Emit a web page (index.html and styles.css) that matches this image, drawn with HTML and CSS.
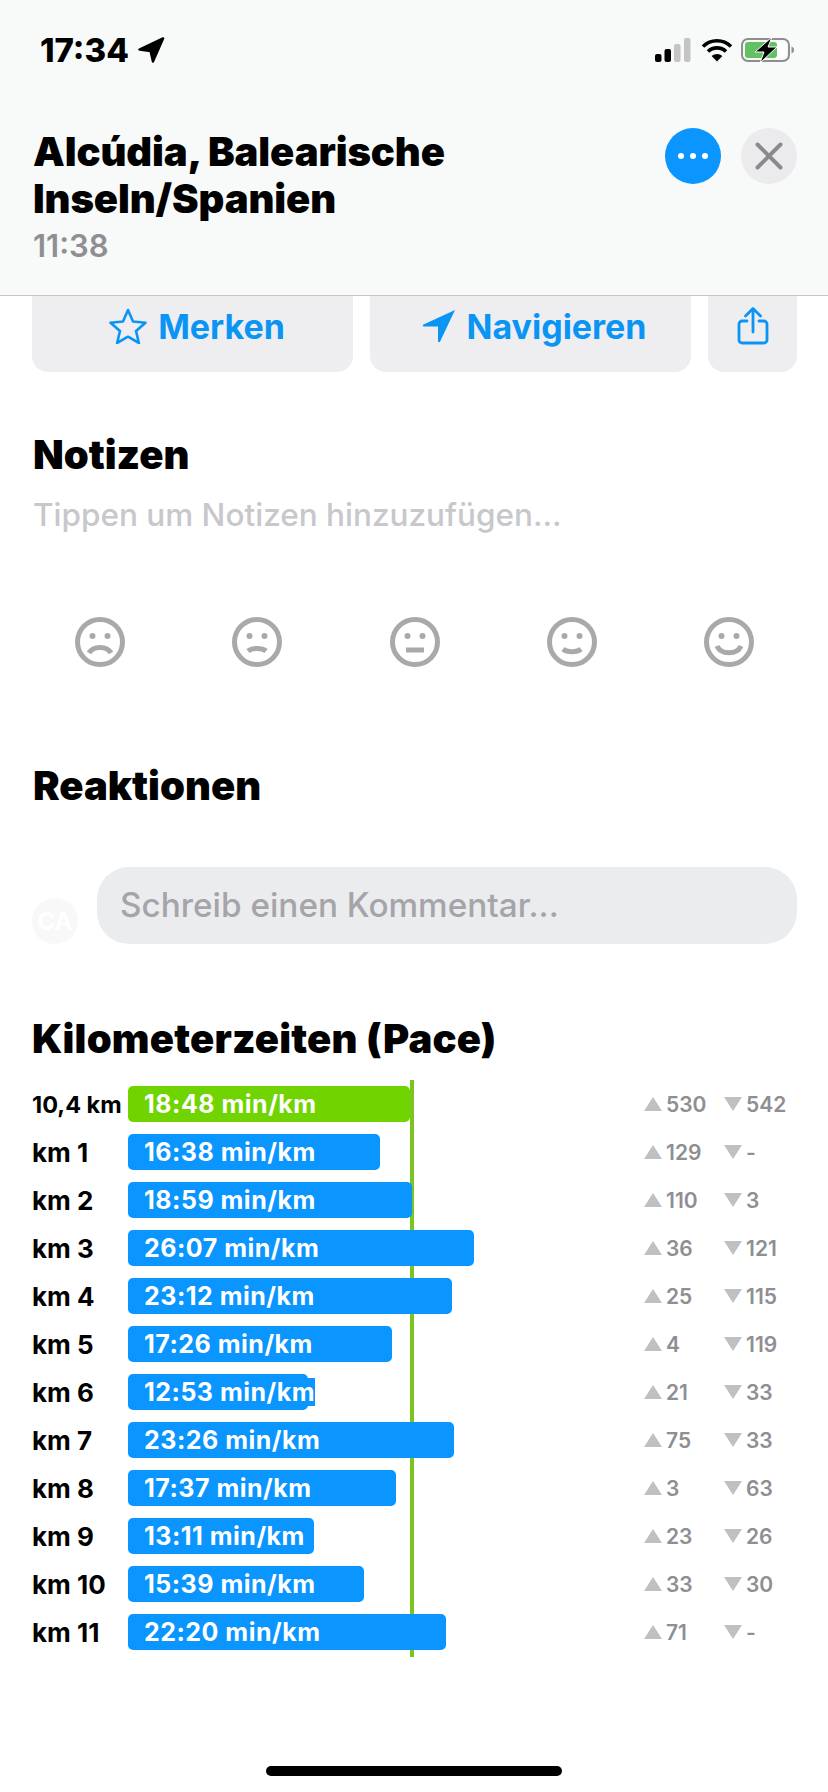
FILE: index.html
```html
<!DOCTYPE html>
<html lang="de">
<head>
  <meta charset="UTF-8">
  <meta name="viewport" content="width=device-width, initial-scale=1.0">
  <title>Aktivität</title>
  <link rel="stylesheet" href="styles.css">
</head>
<body>

<header class="top">
  <div class="status">
    <div class="status-left">
      <span class="clock">17:34</span>
      <svg class="loc-small" viewBox="0 0 28 27"><path d="M26 1 1.500 12.500 13 14l2.500 11z" fill="#000" stroke="#000" stroke-width="2.500" stroke-linejoin="round"/></svg>
    </div>
    <div class="status-right">
      <svg class="signal" viewBox="0 0 36 24">
        <rect x="0" y="16" width="6.5" height="8" rx="2" fill="#000"/>
        <rect x="9.5" y="11" width="6.5" height="13" rx="2" fill="#000"/>
        <rect x="19" y="6" width="6.5" height="18" rx="2" fill="#c4c4c4"/>
        <rect x="29" y="0" width="6.5" height="24" rx="2" fill="#c4c4c4"/>
      </svg>
      <svg class="wifi" viewBox="0 0 32 24">
        <path d="M2 8.5a20 20 0 0 1 28 0M7 13.5a13 13 0 0 1 18 0" fill="none" stroke="#000" stroke-width="3.6"/>
        <path d="M16 23.5 10.6 18a8 8 0 0 1 10.8 0z" fill="#000"/>
      </svg>
      <svg class="battery" viewBox="0 0 54 26">
        <rect x="1" y="2" width="47" height="22" rx="6" fill="none" stroke="#8e8e8e" stroke-width="2"/>
        <rect x="4" y="5" width="41" height="16" rx="3" fill="#fff"/>
        <rect x="4" y="5" width="32" height="16" rx="3" fill="#62c163"/>
        <path d="M50.500 9.500c2 .8 2.500 2 2.500 3.500s-.5 2.700-2.500 3.500z" fill="#8e8e8e"/>
        <path d="M31 0 14 15h9l-4 11 17-16h-9z" fill="#000" stroke="#fff" stroke-width="1"/>
      </svg>
    </div>
  </div>

  <div class="head">
    <div class="head-text">
      <h1>Alcúdia, Balearische Inseln/Spanien</h1>
      <p class="head-time">11:38</p>
    </div>
    <div class="head-btns">
      <button class="round-btn more"><i></i><i></i><i></i></button>
      <button class="round-btn close">
        <svg viewBox="0 0 28 28"><path d="M2.500 2.500l23 23M25.500 2.500l-23 23" stroke="#8a8a8e" stroke-width="4" stroke-linecap="round"/></svg>
      </button>
    </div>
  </div>
</header>

<div class="actions">
  <a class="action grow">
    <svg class="ic-star" viewBox="0 0 40 36"><path d="M20 2l5 11.500 12.500 1.200-9.500 8.300 2.900 12-10.900-6.300-10.900 6.300 2.900-12-9.500-8.300L15 13.500z" fill="none" stroke="#0a95f5" stroke-width="2.600" stroke-linejoin="round"/></svg>
    Merken
  </a>
  <a class="action grow">
    <svg class="ic-nav" viewBox="0 0 34 34"><path d="M33 1 1.500 15.500c-1.200.6-.8 2 .5 2h14v14.500c0 1.300 1.500 1.600 2.100.5z" fill="#0a95f5"/></svg>
    Navigieren
  </a>
  <a class="action share">
    <svg class="ic-share" viewBox="0 0 32 38"><path d="M10 14H5a3 3 0 0 0-3 3v16a3 3 0 0 0 3 3h22a3 3 0 0 0 3-3V17a3 3 0 0 0-3-3h-5M16 25V2M8.500 9 16 1.500 23.500 9" fill="none" stroke="#0a95f5" stroke-width="2.800" stroke-linecap="round" stroke-linejoin="round"/></svg>
  </a>
</div>

<section class="notes">
  <h2>Notizen</h2>
  <p class="notes-hint">Tippen um Notizen hinzuzufügen...</p>
  <div class="faces">
    <svg class="face" viewBox="0 0 50 50"><circle cx="25" cy="25" r="22.500"/><circle class="eye" cx="17.500" cy="19" r="3"/><circle class="eye" cx="32.500" cy="19" r="3"/><path d="M14 36c4-7.500 18-7.500 22 0"/></svg>
    <svg class="face" viewBox="0 0 50 50"><circle cx="25" cy="25" r="22.500"/><circle class="eye" cx="17.500" cy="19" r="3"/><circle class="eye" cx="32.500" cy="19" r="3"/><path d="M16 34c4-3.500 14-3.500 18 0"/></svg>
    <svg class="face" viewBox="0 0 50 50"><circle cx="25" cy="25" r="22.500"/><circle class="eye" cx="17.500" cy="19" r="3"/><circle class="eye" cx="32.500" cy="19" r="3"/><path d="M16 33h18"/></svg>
    <svg class="face" viewBox="0 0 50 50"><circle cx="25" cy="25" r="22.500"/><circle class="eye" cx="17.500" cy="19" r="3"/><circle class="eye" cx="32.500" cy="19" r="3"/><path d="M16 32c4 3.500 14 3.500 18 0"/></svg>
    <svg class="face" viewBox="0 0 50 50"><circle cx="25" cy="25" r="22.500"/><circle class="eye" cx="17.500" cy="19" r="3"/><circle class="eye" cx="32.500" cy="19" r="3"/><path d="M13 29c4 9 20 9 24 0"/></svg>
  </div>
</section>

<section class="reactions">
  <h2>Reaktionen</h2>
  <div class="comment-row">
    <div class="avatar">CA</div>
    <div class="comment-input">Schreib einen Kommentar...</div>
  </div>
</section>

<section class="pace">
  <h2>Kilometerzeiten (Pace)</h2>
  <div class="pace-table">
    <div class="avg-line"></div>

    <div class="pace-row">
      <span class="km small">10,4 km</span>
      <div class="track"><div class="bar green" style="width:282px"><span>18:48 min/km</span></div></div>
      <span class="stat"><i class="up"></i>530</span>
      <span class="stat"><i class="down"></i>542</span>
    </div>
    <div class="pace-row">
      <span class="km">km 1</span>
      <div class="track"><div class="bar" style="width:252px"><span>16:38 min/km</span></div></div>
      <span class="stat"><i class="up"></i>129</span>
      <span class="stat"><i class="down"></i>-</span>
    </div>
    <div class="pace-row">
      <span class="km">km 2</span>
      <div class="track"><div class="bar" style="width:284px"><span>18:59 min/km</span></div></div>
      <span class="stat"><i class="up"></i>110</span>
      <span class="stat"><i class="down"></i>3</span>
    </div>
    <div class="pace-row">
      <span class="km">km 3</span>
      <div class="track"><div class="bar" style="width:346px"><span>26:07 min/km</span></div></div>
      <span class="stat"><i class="up"></i>36</span>
      <span class="stat"><i class="down"></i>121</span>
    </div>
    <div class="pace-row">
      <span class="km">km 4</span>
      <div class="track"><div class="bar" style="width:324px"><span>23:12 min/km</span></div></div>
      <span class="stat"><i class="up"></i>25</span>
      <span class="stat"><i class="down"></i>115</span>
    </div>
    <div class="pace-row">
      <span class="km">km 5</span>
      <div class="track"><div class="bar" style="width:264px"><span>17:26 min/km</span></div></div>
      <span class="stat"><i class="up"></i>4</span>
      <span class="stat"><i class="down"></i>119</span>
    </div>
    <div class="pace-row">
      <span class="km">km 6</span>
      <div class="track"><div class="bar" style="width:180px"><span>12:53 min/km</span></div></div>
      <span class="stat"><i class="up"></i>21</span>
      <span class="stat"><i class="down"></i>33</span>
    </div>
    <div class="pace-row">
      <span class="km">km 7</span>
      <div class="track"><div class="bar" style="width:326px"><span>23:26 min/km</span></div></div>
      <span class="stat"><i class="up"></i>75</span>
      <span class="stat"><i class="down"></i>33</span>
    </div>
    <div class="pace-row">
      <span class="km">km 8</span>
      <div class="track"><div class="bar" style="width:268px"><span>17:37 min/km</span></div></div>
      <span class="stat"><i class="up"></i>3</span>
      <span class="stat"><i class="down"></i>63</span>
    </div>
    <div class="pace-row">
      <span class="km">km 9</span>
      <div class="track"><div class="bar" style="width:186px"><span>13:11 min/km</span></div></div>
      <span class="stat"><i class="up"></i>23</span>
      <span class="stat"><i class="down"></i>26</span>
    </div>
    <div class="pace-row">
      <span class="km">km 10</span>
      <div class="track"><div class="bar" style="width:236px"><span>15:39 min/km</span></div></div>
      <span class="stat"><i class="up"></i>33</span>
      <span class="stat"><i class="down"></i>30</span>
    </div>
    <div class="pace-row">
      <span class="km">km 11</span>
      <div class="track"><div class="bar" style="width:318px"><span>22:20 min/km</span></div></div>
      <span class="stat"><i class="up"></i>71</span>
      <span class="stat"><i class="down"></i>-</span>
    </div>
  </div>
</section>

<div class="home-bar"></div>

</body>
</html>
```

FILE: styles.css
```css
* {
  box-sizing: border-box;
}
html, body {
  margin: 0;
  height: 1792px;
  overflow: hidden;
}
body {
  position: relative;
  font-family: Inter, 'Liberation Sans', sans-serif;
  background: #fff;
  color: #000;
}
h1, h2, p {
  margin: 0;
}
h2 {
  font-size: 40px;
  font-weight: 900;
  line-height: 46px;
}

/* top area */
.top {
  height: 296px;
  background: #f8f9f9;
  border-bottom: 1px solid #c6c6c8;
}
.status {
  display: flex;
  justify-content: space-between;
  align-items: center;
  height: 100px;
  padding: 0 33px 0 40px;
}
.status-left, .status-right {
  display: flex;
  align-items: center;
}
.clock {
  font-size: 33px;
  font-weight: 800;
}
.loc-small {
  width: 27px;
  height: 27px;
  margin-left: 9px;
}
.signal {
  width: 36px;
  height: 24px;
}
.wifi {
  width: 32px;
  height: 24px;
  margin-left: 10px;
}
.battery {
  width: 54px;
  height: 26px;
  margin-left: 8px;
}
.head {
  display: flex;
  justify-content: space-between;
  padding: 28px 31px 0 33px;
}
.head-text {
  width: 440px;
}
h1 {
  font-size: 40px;
  font-weight: 900;
  line-height: 47px;
  letter-spacing: -0.1px;
}
.head-time {
  margin-top: 7px;
  font-size: 31px;
  font-weight: 600;
  line-height: 34px;
  color: #8e8e93;
}
.head-btns {
  display: flex;
  gap: 20px;
}
.round-btn {
  display: flex;
  align-items: center;
  justify-content: center;
  width: 56px;
  height: 56px;
  padding: 0;
  border: none;
  border-radius: 50%;
}
.more {
  gap: 6px;
  background: #0a95ff;
}
.more i {
  width: 6px;
  height: 6px;
  border-radius: 50%;
  background: #fff;
}
.close {
  background: #ebebed;
}
.close svg {
  width: 28px;
  height: 28px;
}

/* buttons under the header */
.actions {
  display: flex;
  gap: 17px;
  padding: 0 31px 0 32px;
}
.action {
  display: flex;
  align-items: center;
  justify-content: center;
  height: 76px;
  padding-bottom: 16px;
  background: #eeeef0;
  border-radius: 0 0 16px 16px;
  color: #0a95f5;
  font-size: 34px;
  font-weight: 700;
}
.grow {
  width: 321px;
  padding-left: 8px;
}
.share {
  flex: 1;
}
.ic-star {
  width: 40px;
  height: 36px;
  margin-right: 10px;
}
.ic-nav {
  width: 34px;
  height: 34px;
  margin-right: 10px;
}
.ic-share {
  width: 32px;
  height: 38px;
}

.notes {
  padding: 60px 31px 0 33px;
}
.notes-hint {
  margin-top: 17px;
  font-size: 31.500px;
  font-weight: 500;
  line-height: 40px;
  color: #c7c7cc;
}
.faces {
  display: flex;
  justify-content: space-between;
  padding: 0 43px 0 42px;
  margin-top: 82px;
}
.face {
  width: 50px;
  height: 50px;
  fill: none;
  stroke: #a9a9a9;
  stroke-width: 5;
}
.face .eye {
  fill: #a9a9a9;
  stroke: none;
}

.reactions {
  padding: 96px 31px 0 33px;
}
.comment-row {
  display: flex;
  align-items: flex-end;
  gap: 19px;
  margin-top: 58px;
}
.avatar {
  display: flex;
  align-items: center;
  justify-content: center;
  flex: none;
  width: 46px;
  height: 46px;
  margin-left: -1px;
  border-radius: 50%;
  background: #f8f8f8;
  color: #fff;
  font-size: 24px;
  font-weight: 700;
}
.comment-input {
  flex: 1;
  height: 77px;
  padding-left: 23px;
  border-radius: 32px;
  background: #ebecee;
  color: #a5a5a9;
  font-size: 33.300px;
  font-weight: 500;
  line-height: 77px;
}

.pace {
  padding: 72px 0 0 32px;
}
.pace h2 {
  letter-spacing: 0.2px;
}
.pace-table {
  position: relative;
  margin-top: 18px;
}
.avg-line {
  position: absolute;
  left: 378px;
  top: 0;
  width: 4px;
  height: 577px;
  background: #7ac51f;
}
.pace-row {
  display: flex;
  align-items: center;
  height: 48px;
}
.km {
  flex: none;
  width: 96px;
  font-size: 26px;
  font-weight: 700;
}
.km.small {
  font-size: 23.500px;
}
.track {
  position: relative;
  flex: none;
  width: 516px;
}
.bar {
  display: flex;
  align-items: center;
  height: 36px;
  padding-left: 16px;
  border-radius: 5px;
  background: #0a95ff;
  color: #fff;
  font-size: 25px;
  font-weight: 700;
  letter-spacing: 0.5px;
  white-space: nowrap;
}
.bar span {
  line-height: 28px;
  background: inherit;
}
.bar.green {
  background: #6fd400;
}
.stat {
  display: flex;
  align-items: center;
  flex: none;
  width: 80px;
  color: #8e8e93;
  font-size: 21px;
  font-weight: 600;
}
.stat i {
  width: 0;
  height: 0;
  margin-right: 4px;
  border-left: 9.500px solid transparent;
  border-right: 9.500px solid transparent;
}
.stat .up {
  border-bottom: 14px solid #c0c0c4;
}
.stat .down {
  border-top: 14px solid #c0c0c4;
}

.home-bar {
  position: absolute;
  left: 266px;
  bottom: 16px;
  width: 296px;
  height: 10px;
  border-radius: 5px;
  background: #000;
}
```
